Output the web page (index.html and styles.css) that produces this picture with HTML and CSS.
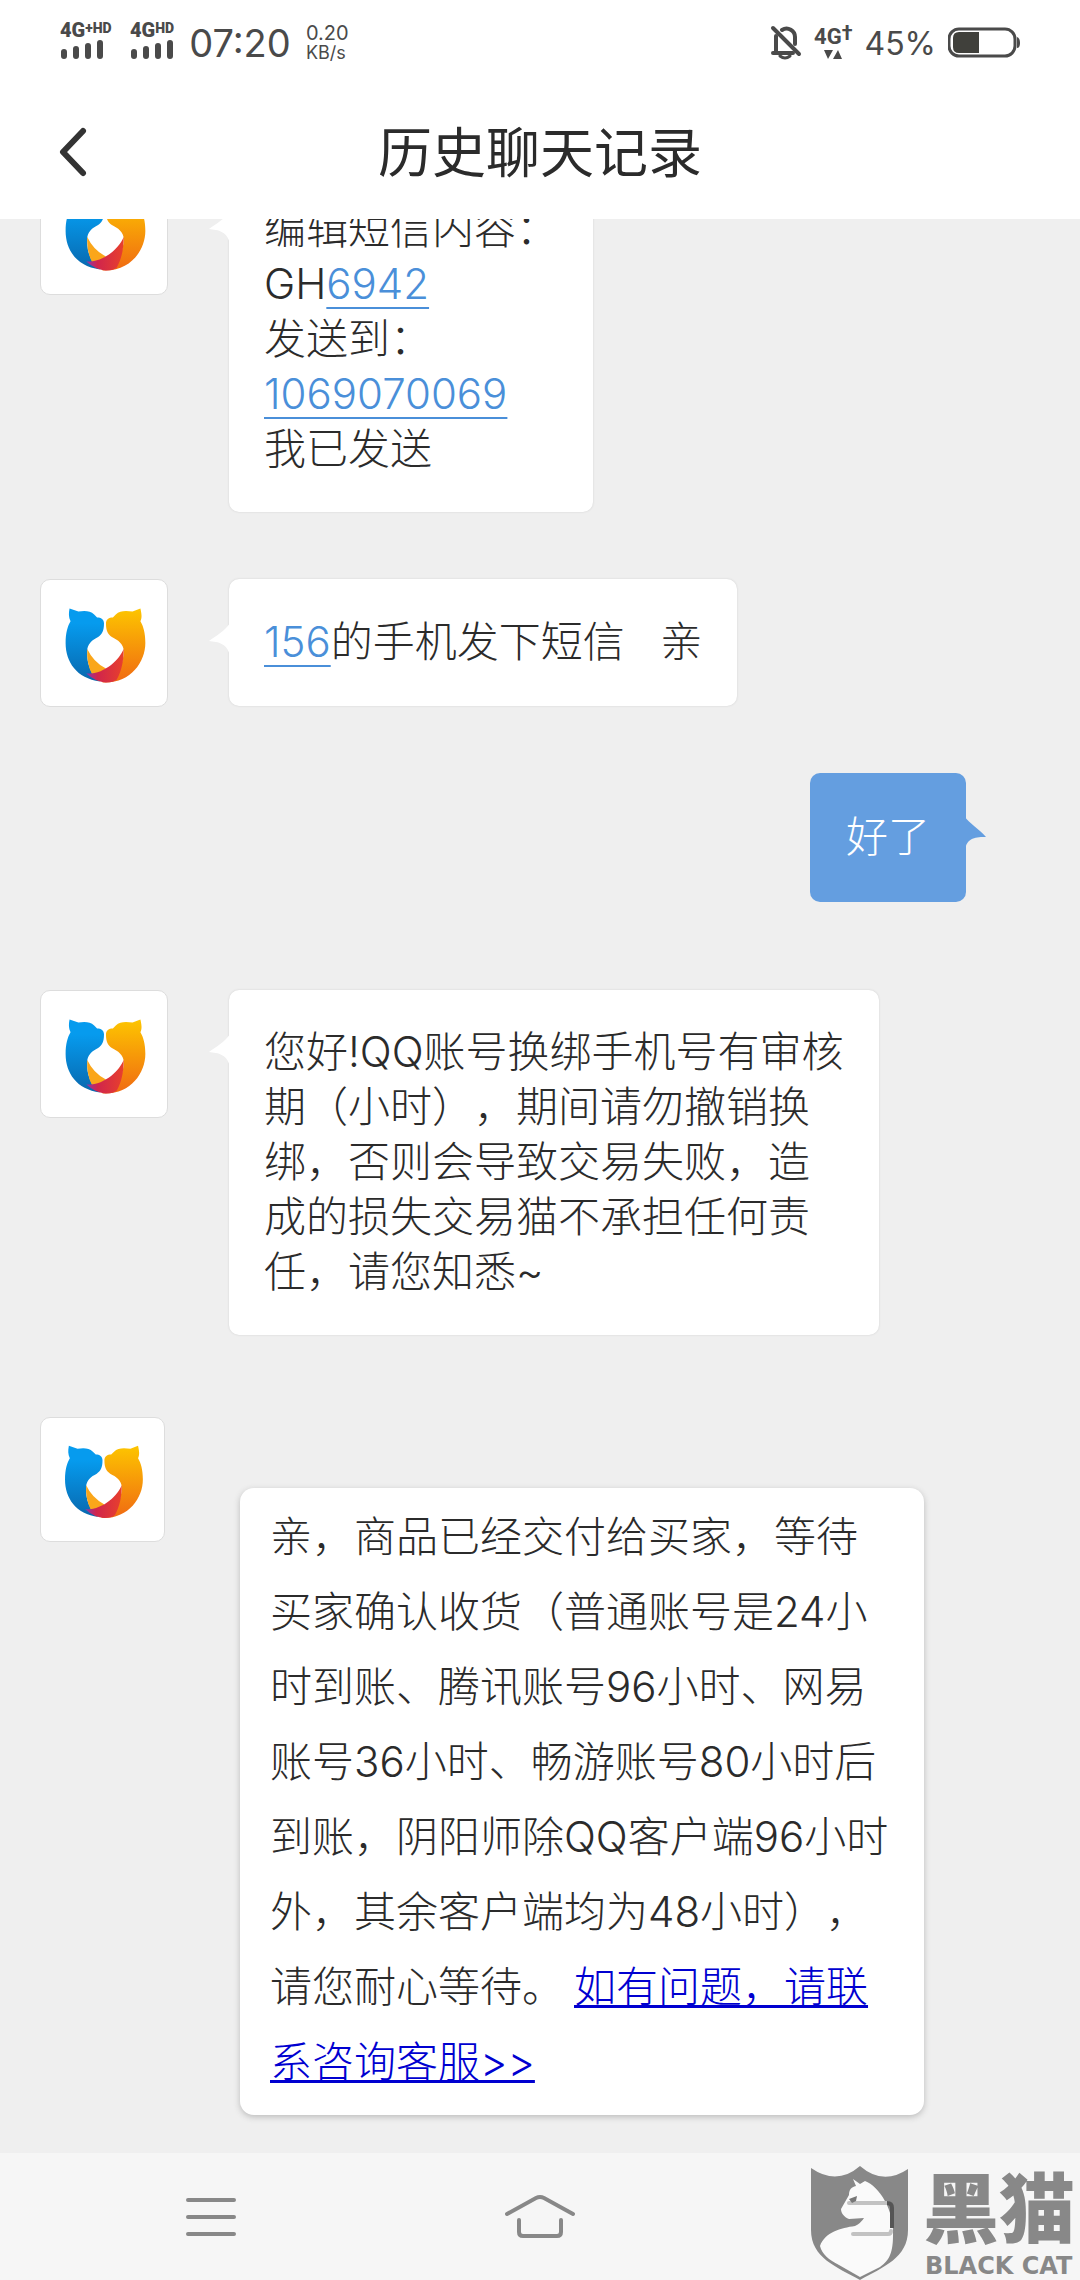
FILE: index.html
```html
<!DOCTYPE html>
<html lang="zh-CN">
<head>
    <meta charset="UTF-8">
    <meta name="viewport" content="width=device-width, initial-scale=1.0">
    <title>历史聊天记录</title>
    <link rel="stylesheet" href="styles.css">
</head>
<body>
    <!-- 公用图形 -->
    <svg class="defs" width="0" height="0">
        <defs>
            <linearGradient id="blue" x1="0" y1="0" x2="0" y2="1">
                <stop offset="0.2" stop-color="#069bee"/>
                <stop offset="1" stop-color="#0868ae"/>
            </linearGradient>
            <linearGradient id="orange" x1="0" y1="0" x2="0" y2="1">
                <stop offset="0" stop-color="#fdc500"/>
                <stop offset="1" stop-color="#f06a12"/>
            </linearGradient>
            <linearGradient id="red" x1="0" y1="0" x2="1" y2="0">
                <stop offset="0" stop-color="#8a35b0"/>
                <stop offset="0.3" stop-color="#d0254c"/>
                <stop offset="1" stop-color="#e8402c"/>
            </linearGradient>
            <symbol id="logo" viewBox="0 0 128 128">
                <path fill="url(#orange)" d="M101 29L93 32C86 31 80 31 76 35L73 38C69 38 66 40 66 44C66 52 68 55 72 58C78 61 84 65 84 72C84 84 79 96 62 104C90 106 106 84 106 64C106 54 104 47 101 42C103 38 102 34 101 29Z"/>
                <path fill="url(#blue)" d="M29 29L38 32C44 31 50 31 54 35L57 38C61 38 64 40 64 44C64 52 62 55 58 58C52 61 47 65 47 72C46 84 51 97 60 103C36 100 25 83 25 64C25 54 27 47 30 42C28 38 28 34 29 29Z"/>
                <path fill="#faa61a" d="M47 70Q53 83 66 90Q60 95 52 96Q46 84 47 70Z"/>
                <path fill="url(#red)" d="M84 70C80 80 65 96 46 95Q56 104 66 104Q74 104 77 101C82 92 84 82 84 70Z"/>
            </symbol>
            <symbol id="tail" viewBox="0 0 22 34">
                <path fill="#fff" d="M22 0C18 7 8 13 1 18C10 19 20 20 22 34Z"/>
            </symbol>
            <symbol id="tail-right" viewBox="0 0 22 34">
                <path fill="#649ee0" d="M0 0C4 6 14 12 21 20C12 20 1 20 0 34Z"/>
            </symbol>
            <symbol id="bars" viewBox="0 0 44 20">
                <path fill="none" stroke="#4a4a4a" stroke-width="6" stroke-linecap="round" d="M4 13v4M16 10v7M28 7v10M40 4v13"/>
            </symbol>
        </defs>
    </svg>

    <header class="top">
        <!-- 状态栏 -->
        <div class="status">
            <div class="signal">
                <div class="net">4G<sup>+HD</sup></div>
                <svg width="44" height="20"><use href="#bars"/></svg>
            </div>
            <div class="signal">
                <div class="net">4G<sup>HD</sup></div>
                <svg width="44" height="20"><use href="#bars"/></svg>
            </div>
            <div class="time">07:20</div>
            <div class="speed">
                <div>0.20</div>
                <div class="unit">KB/s</div>
            </div>
            <div class="status-right">
                <svg width="32" height="36" viewBox="0 0 32 36" fill="none" stroke="#4a4a4a" stroke-width="4" stroke-linecap="round">
                    <path d="M6 11V26M12 5C18 1 25 6 25 12V19M3 28H23"/>
                    <path d="M3 3L29 29"/>
                    <path d="M10 31Q15 35 20 31" stroke-width="3"/>
                </svg>
                <div class="data">
                    <div class="net">4G<sup>†</sup></div>
                    <svg width="18" height="9" viewBox="0 0 18 9"><path fill="#4a4a4a" d="M0 0H9L4 9ZM9 9H18L14 0Z"/></svg>
                </div>
                <div class="percent">45%</div>
                <svg width="72" height="32" viewBox="0 0 72 32">
                    <rect x="1" y="2" width="66" height="27" rx="10" fill="none" stroke="#4a4a4a" stroke-width="3"/>
                    <path fill="#40403b" d="M11 5H31V26H11Q5 26 5 20V11Q5 5 11 5Z"/>
                    <path fill="#4a4a4a" d="M69 10Q72 11 72 16T69 21Z"/>
                </svg>
            </div>
        </div>
        <!-- 标题栏 -->
        <div class="title-bar">
            <button class="back" aria-label="返回">
                <svg width="30" height="52" viewBox="0 0 30 52" fill="none" stroke="#333" stroke-width="6" stroke-linecap="round" stroke-linejoin="round"><path d="M25 5L5 26L25 47"/></svg>
            </button>
            <h1>历史聊天记录</h1>
        </div>
    </header>

    <!-- 聊天内容 -->
    <main class="chat">
        <div class="msg">
            <div class="avatar"><svg><use href="#logo"/></svg></div>
            <div class="bubble">
                <svg class="tail"><use href="#tail"/></svg>
                编辑短信内容：<br>GH<a href="tel:6942">6942</a><br>发送到：<br><a href="tel:1069070069">1069070069</a><br>我已发送
            </div>
        </div>

        <div class="msg short">
            <div class="avatar"><svg><use href="#logo"/></svg></div>
            <div class="bubble">
                <svg class="tail"><use href="#tail"/></svg>
                <a href="tel:156">156</a>的手机发下短信&nbsp;&nbsp;&nbsp;亲
            </div>
        </div>

        <div class="msg mine">
            <div class="bubble">
                <svg class="tail"><use href="#tail-right"/></svg>
                好了
            </div>
        </div>

        <div class="msg after-mine">
            <div class="avatar"><svg><use href="#logo"/></svg></div>
            <div class="bubble">
                <svg class="tail"><use href="#tail"/></svg>
                您好!QQ账号换绑手机号有审核<br>期（小时），期间请勿撤销换<br>绑，否则会导致交易失败，造<br>成的损失交易猫不承担任何责<br>任，请您知悉~
            </div>
        </div>

        <div class="msg notice">
            <div class="avatar"><svg><use href="#logo"/></svg></div>
            <div class="card">
                亲，商品已经交付给买家，等待<br>买家确认收货（普通账号是24小<br>时到账、腾讯账号96小时、网易<br>账号36小时、畅游账号80小时后<br>到账，阴阳师除QQ客户端96小时<br>外，其余客户端均为48小时），<br>请您耐心等待。<a href="#">如有问题，请联<br>系咨询客服&gt;&gt;</a>
            </div>
        </div>
    </main>

    <!-- 底部导航 -->
    <nav class="nav">
        <button aria-label="菜单">
            <svg width="70" height="50" viewBox="0 0 70 50" fill="none" stroke="#888" stroke-width="4" stroke-linecap="round"><path d="M12 8H58M12 25H58M12 42H58"/></svg>
        </button>
        <button aria-label="主页">
            <svg width="74" height="50" viewBox="0 0 74 50" fill="none" stroke="#888" stroke-width="4" stroke-linecap="round"><path d="M4 22L33 6Q37 4 41 6L70 22M16 28V40Q16 44 20 44H54Q58 44 58 40V28"/></svg>
        </button>
        <button aria-label="后退">
            <svg width="70" height="50" viewBox="0 0 70 50" fill="none" stroke="#888" stroke-width="4" stroke-linecap="round"><path d="M14 9H50Q54 9 54 13V36Q54 40 50 40H19"/></svg>
        </button>
        <!-- 水印 -->
        <div class="mark">
            <svg width="98" height="114" viewBox="0 0 98 114">
                <path fill="#888" d="M0 2Q26 20 49 0Q72 20 97 3V64C97 92 72 101 49 114C26 101 0 92 0 64Z"/>
                <path fill="#fafafa" d="M42 13L49 18L54 15C68 20 84 45 82 70C82 90 76 96 69 101L49 111L28 99C18 94 11 88 9 80C14 66 30 62 44 60Q50 57 53 52L38 53C33 51 30 47 30 43L38 29C38 24 40 21 45 20Z"/>
                <path fill="none" stroke="#c2c2c2" stroke-width="4" stroke-linecap="round" d="M38 37H76M42 68H77Q80 68 80 65"/>
                <path fill="none" stroke="#555" stroke-width="4" d="M76 37Q81 37 81 42V62"/>
                <path fill="#777" d="M38 33L46 30L45 35L41 37Z"/>
            </svg>
            <div class="mark-text">
                <strong>黑猫</strong>
                <span>BLACK CAT</span>
            </div>
        </div>
    </nav>
</body>
</html>
```
FILE: styles.css
```css
* {
    box-sizing: border-box;
}
body {
    display: flex;
    flex-direction: column;
    min-height: 100vh;
    margin: 0;
    background: #efefef;
    color: #2b2b2b;
    font-family: Inter, "Noto Sans CJK SC", sans-serif;
    font-weight: 300;
    text-spacing-trim: space-all;
}
button {
    padding: 0;
    border: 0;
    background: none;
}
svg {
    display: block;
}
.defs {
    position: absolute;
}

/* 顶部 */
.top {
    position: relative;
    z-index: 2;
    height: 219px;
    background: #fff;
}
.status {
    display: flex;
    align-items: center;
    height: 86px;
    padding: 0 60px;
    color: #4a4a4a;
    font-weight: 400;
}
.signal {
    width: 70px;
    margin-bottom: 6px;
}
.net {
    font-family: Roboto, sans-serif;
    font-size: 20px;
    line-height: 18px;
    font-weight: 900;
    white-space: nowrap;
}
.net sup {
    font-size: 14px;
    line-height: 0;
    vertical-align: 4px;
}
.time {
    width: 116px;
    margin-left: -18px;
    font-size: 38px;
    text-align: center;
}
.speed {
    margin-left: 8px;
    font-size: 20px;
    line-height: 20px;
}
.unit {
    font-size: 18px;
}
.status-right {
    display: flex;
    align-items: center;
    gap: 12px;
    margin-left: auto;
}
.data .net {
    font-size: 22px;
    font-weight: 700;
}
.data sup {
    font-size: 20px;
}
.data svg {
    margin: 4px 0 0 10px;
}
.percent {
    font-size: 32px;
}
.title-bar {
    position: relative;
    display: flex;
    align-items: center;
    justify-content: center;
    height: 136px;
}
.back {
    position: absolute;
    left: 58px;
    top: 40px;
}
h1 {
    margin: 0;
    font-size: 54px;
    line-height: 80px;
    font-weight: 400;
}

/* 聊天区，首条消息滚到标题栏下面 */
.chat {
    flex: 1;
    margin-top: -52px;
    padding: 0 40px 38px;
}
.msg {
    display: flex;
    align-items: flex-start;
    gap: 61px;
    margin-bottom: 67px;
}
.avatar {
    flex: none;
    width: 128px;
    height: 128px;
    border: 1px solid #ddd;
    border-radius: 10px;
    background: #fff;
}
.avatar svg {
    width: 100%;
    height: 100%;
}
.bubble {
    position: relative;
    padding: 34px 35px 36px;
    border-radius: 10px;
    background: #fff;
    box-shadow: 0 0 2px #ccc;
    font-size: 42px;
    line-height: 55px;
}
.bubble a {
    color: #4a8fd9;
    text-decoration-thickness: 2px;
    text-underline-offset: 8px;
}
.tail {
    position: absolute;
    left: -21px;
    top: 44px;
    width: 22px;
    height: 34px;
}
.short {
    margin-bottom: 66px;
}
.short .bubble {
    padding: 35px 35px 37px;
}
.mine {
    justify-content: flex-end;
    padding-right: 74px;
    margin-bottom: 88px;
}
.mine .bubble {
    padding: 36px 36px 38px;
    background: #649ee0;
    box-shadow: none;
    color: #fff;
}
.mine .tail {
    left: auto;
    right: -21px;
}
.after-mine {
    margin-bottom: 82px;
}
.notice {
    gap: 75px;
    margin-bottom: 0;
}
.notice .avatar {
    width: 125px;
    height: 125px;
}
.card {
    flex: 0 1 684px;
    margin-top: 71px;
    padding: 11px 0 16px 30px;
    border-radius: 14px;
    background: #fff;
    box-shadow: 0 2px 6px #bbb;
    font-size: 42px;
    line-height: 75px;
    white-space: nowrap;
}
.card a {
    margin-left: 10px;
    color: #0000d0;
    text-decoration-thickness: 3px;
    text-underline-offset: 3px;
    text-decoration-skip-ink: none;
}

/* 底部导航 */
.nav {
    position: relative;
    display: flex;
    align-items: center;
    justify-content: space-between;
    height: 127px;
    padding: 0 176px;
    background: #f6f6f6;
}
.mark {
    position: absolute;
    right: 0;
    bottom: 0;
    display: flex;
    gap: 14px;
    color: #888;
}
.mark-text {
    display: flex;
    flex-direction: column;
    width: 157px;
    white-space: nowrap;
}
.mark-text strong {
    font-size: 76px;
    line-height: 86px;
    font-weight: 900;
}
.mark-text span {
    padding-left: 2px;
    font-family: "DejaVu Sans", sans-serif;
    font-size: 24px;
    line-height: 28px;
    font-weight: 700;
}
```
